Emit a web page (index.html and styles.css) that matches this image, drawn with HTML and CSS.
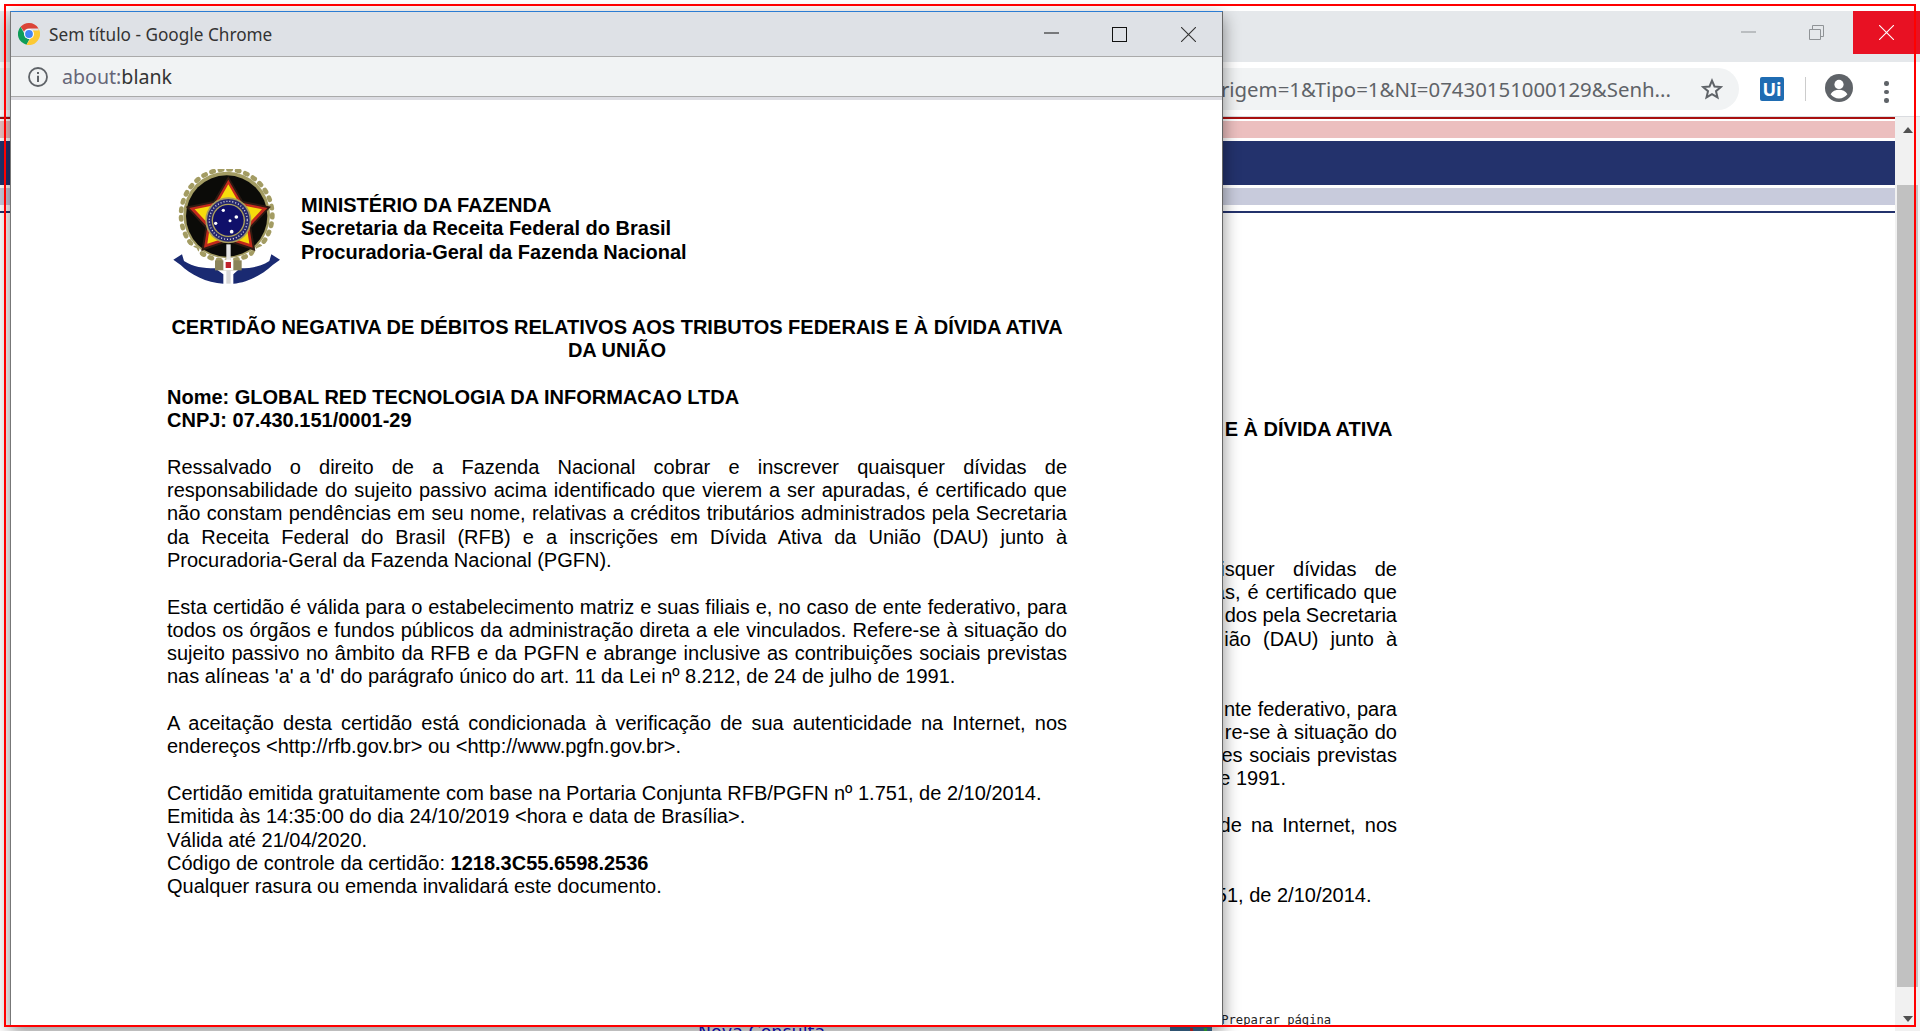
FILE: index.html
```html
<!DOCTYPE html>
<html lang="pt-BR">
<head>
<meta charset="utf-8">
<title>Sem título - Google Chrome</title>
<link rel="stylesheet" href="styles.css">
</head>
<body>
<div class="desktop">

  <section class="win-back">
    <header class="back-title">
      <svg class="bc-min" width="15" height="2" viewBox="0 0 15 2"><path d="M0 1H15" stroke="#8f9396" stroke-width="1"/></svg>
      <svg class="bc-restore" width="15" height="15" viewBox="0 0 15 15"><path d="M.5 4.500H11.500V14.500H.5ZM3.500 4.500V.5H14.500V11.500H11.500" fill="none" stroke="#8f9396"/></svg>
      <div class="bc-close"><svg width="15" height="15" viewBox="0 0 15 15"><path d="M0 0L15 15M15 0L0 15" stroke="#fff" stroke-width="1.100"/></svg></div>
    </header>
    <div class="back-tools">
      <div class="pill">
        <span class="url">rigem=1&amp;Tipo=1&amp;NI=07430151000129&amp;Senh...</span>
        <svg class="star" width="22" height="22" viewBox="0 0 22 22"><path d="M11 2.600l2.500 5.900 6.400.5-4.900 4.200 1.500 6.200L11 16.100l-5.500 3.300L7 13.200 2.100 9l6.400-.5z" fill="none" stroke="#5f6368" stroke-width="2"/></svg>
      </div>
      <div class="ui-logo">Ui</div>
      <div class="sep"></div>
      <svg class="avatar" width="28" height="28" viewBox="0 0 28 28"><circle cx="14" cy="14" r="14" fill="#5f6368"/><circle cx="14" cy="10.400" r="4.600" fill="#fff"/><path d="M5.600 20.200c1.600-3 5.200-4.400 8.400-4.400s6.800 1.400 8.400 4.400c-2 2.600-5 4.200-8.400 4.200s-6.400-1.600-8.400-4.200z" fill="#fff"/></svg>
      <div class="dots"><i></i><i></i><i></i></div>
    </div>
    <div class="back-page">
      <div class="back-main">
        <div class="band-rule"></div>
        <div class="band-pink"></div>
        <div class="band-navy"></div>
        <div class="band-lav"></div>
        <div class="band-line"></div>
        <div class="back-doc">
          <div class="frag frag-title">E À DÍVIDA ATIVA</div>
          <div class="frag-group gap-5">
            <div class="frag ws-128">isquer dívidas de</div>
            <div class="frag ws-14">as, é certificado que</div>
            <div class="frag">dos pela Secretaria</div>
            <div class="frag ws-64">ião (DAU) junto à</div>
          </div>
          <div class="frag-group gap-2">
            <div class="frag ws-04">nte federativo, para</div>
            <div class="frag ws-07">re-se à situação do</div>
            <div class="frag ws-11">es sociais previstas</div>
            <div class="frag end-111">e 1991.</div>
          </div>
          <div class="frag-group gap-1">
            <div class="frag ws-36">de na Internet, nos</div>
          </div>
          <div class="frag-group gap-2">
            <div class="frag end-26">51, de 2/10/2014.</div>
          </div>
        </div>
        <div class="back-foot">
          <a class="nova">Nova Consulta</a>
          <div class="foot-icon"><i class="fi-r"></i><i class="fi-g"></i></div>
          <span class="preparar">Preparar página</span>
        </div>
      </div>
      <div class="scrollbar">
        <div class="arrow-up"></div>
        <div class="thumb"></div>
        <div class="arrow-down"></div>
      </div>
    </div>
  </section>

  <section class="win-popup">
    <header class="pop-title">
      <svg class="chrome" width="22" height="22" viewBox="0 0 22 22">
        <path d="M11 0A11 11 0 0 1 20.500 5.500H11A5.500 5.500 0 0 0 6 8.600L2.600 3.800A11 11 0 0 1 11 0z" fill="#db4437"/>
        <path d="M2.600 3.800L6.500 11A5 5 0 0 0 11.500 16L8.500 21.700A11 11 0 0 1 2.600 3.800z" fill="#0f9d58"/>
        <path d="M20.500 5.500A11 11 0 0 1 8.500 21.700L13.600 13.500A5 5 0 0 0 14.500 7.500H20.500z" fill="#fcc934"/>
        <circle cx="11" cy="11" r="5" fill="#fff"/>
        <circle cx="11" cy="11" r="3.900" fill="#4285f4"/>
      </svg>
      <span class="pop-name">Sem título - Google Chrome</span>
      <svg class="pc-min" width="15" height="2" viewBox="0 0 15 2"><path d="M0 1H15" stroke="#111" stroke-width="1"/></svg>
      <svg class="pc-max" width="15" height="15" viewBox="0 0 15 15"><rect x=".5" y=".5" width="14" height="14" fill="none" stroke="#111"/></svg>
      <svg class="pc-close" width="15" height="15" viewBox="0 0 15 15"><path d="M0 0L15 15M15 0L0 15" stroke="#333" stroke-width="1.100"/></svg>
    </header>
    <div class="pop-addr">
      <svg width="20" height="20" viewBox="0 0 20 20"><circle cx="10" cy="10" r="9" fill="none" stroke="#5f6368" stroke-width="1.800"/><path d="M10 8.800V15M10 5V7" stroke="#5f6368" stroke-width="2"/></svg>
      <span class="addr"><span class="addr-dim">about:</span>blank</span>
    </div>
    <div class="pop-doc">
      <div class="doc-head">
        <svg class="emblem" width="109" height="116" viewBox="36 24 327 348">
          <g class="emblem-soft">
            <circle cx="200" cy="162" r="137" fill="none" stroke="#a39c63" stroke-width="14" stroke-dasharray="7 19" stroke-linecap="round"/>
            <circle cx="200" cy="162" r="130" fill="#a39c63"/>
            <circle cx="200" cy="165" r="122" fill="#0b0b08"/>
            <path d="M40 230L110 262L130 300L90 290Z" fill="#fff"/>
            <path d="M360 230L290 262L270 300L310 290Z" fill="#fff"/>
            <path d="M205 46L249 120L333 137L274 200L286 270L205 242L124 270L136 200L77 137L161 120Z" fill="#2e1a12"/>
            <path d="M205 56L245 125L322 141L268 198L278 260L205 236L132 260L142 198L88 141L165 125Z" fill="#c22a1c"/>
            <path d="M205 70L240 131L306 145L260 194L268 248L205 228L142 248L150 194L104 145L170 131Z" fill="#f6dc0c"/>
            <circle cx="205" cy="178" r="69" fill="#a99d5c"/>
            <circle cx="205" cy="178" r="64" fill="#27286f"/>
            <circle cx="205" cy="178" r="57" fill="none" stroke="#dfe0ea" stroke-width="4" stroke-dasharray="3 6"/>
            <circle cx="205" cy="178" r="50" fill="#b0a35c"/>
            <circle cx="205" cy="178" r="46" fill="#10106a"/>
            <circle cx="190" cy="148" r="5" fill="#fff"/>
            <circle cx="229" cy="168" r="5.500" fill="#fff"/>
            <circle cx="210" cy="179" r="4.500" fill="#fff"/>
            <circle cx="167" cy="187" r="5" fill="#fff"/>
            <circle cx="215" cy="212" r="5.500" fill="#fff"/>
            <path d="M40 296L66 280L72 300C100 318 130 322 165 322L190 340L190 368C140 366 90 340 62 312Z" fill="#1a2a72"/>
            <path d="M360 296L334 280L328 300C300 318 270 322 240 322L220 340L220 368C260 366 310 340 338 312Z" fill="#1a2a72"/>
            <rect x="199" y="250" width="13" height="50" fill="#e4e4e4"/>
            <rect x="165" y="298" width="80" height="30" fill="#8b845a"/>
            <rect x="190" y="296" width="30" height="32" fill="#fff"/>
            <rect x="197" y="303" width="16" height="18" fill="#c0242c"/>
            <rect x="199" y="328" width="13" height="40" fill="#d8d8d8"/>
          </g>
        </svg>
        <div class="head-text">MINISTÉRIO DA FAZENDA<br>Secretaria da Receita Federal do Brasil<br>Procuradoria-Geral da Fazenda Nacional</div>
      </div>
      <h1 class="doc-title">CERTIDÃO NEGATIVA DE DÉBITOS RELATIVOS AOS TRIBUTOS FEDERAIS E À DÍVIDA ATIVA DA UNIÃO</h1>
      <p class="doc-name">Nome: GLOBAL RED TECNOLOGIA DA INFORMACAO LTDA<br>CNPJ: 07.430.151/0001-29</p>
      <p class="doc-par">Ressalvado o direito de a Fazenda Nacional cobrar e inscrever quaisquer dívidas de responsabilidade do sujeito passivo acima identificado que vierem a ser apuradas, é certificado que não constam pendências em seu nome, relativas a créditos tributários administrados pela Secretaria da Receita Federal do Brasil (RFB) e a inscrições em Dívida Ativa da União (DAU) junto à Procuradoria-Geral da Fazenda Nacional (PGFN).</p>
      <p class="doc-par">Esta certidão é válida para o estabelecimento matriz e suas filiais e, no caso de ente federativo, para todos os órgãos e fundos públicos da administração direta a ele vinculados. Refere-se à situação do sujeito passivo no âmbito da RFB e da PGFN e abrange inclusive as contribuições sociais previstas nas alíneas 'a' a 'd' do parágrafo único do art. 11 da Lei nº 8.212, de 24 de julho de 1991.</p>
      <p class="doc-par">A aceitação desta certidão está condicionada à verificação de sua autenticidade na Internet, nos endereços &lt;http://rfb.gov.br&gt; ou &lt;http://www.pgfn.gov.br&gt;.</p>
      <p class="doc-par doc-last">Certidão emitida gratuitamente com base na Portaria Conjunta RFB/PGFN nº 1.751, de 2/10/2014.<br>Emitida às 14:35:00 do dia 24/10/2019 &lt;hora e data de Brasília&gt;.<br>Válida até 21/04/2020.<br>Código de controle da certidão: <b>1218.3C55.6598.2536</b><br>Qualquer rasura ou emenda invalidará este documento.</p>
    </div>
  </section>

  <div class="annot"></div>
</div>
</body>
</html>
```

FILE: styles.css
```css
* { box-sizing: border-box; }
html, body { margin: 0; height: 100%; overflow: hidden; background: #fff; }
.desktop { position: relative; width: 1920px; height: 1031px; overflow: hidden; background: #fff; }

/* back window */
.win-back { position: absolute; left: 0; top: 11px; width: 1920px; height: 1020px; display: flex; flex-direction: column; background: #fff; }
.back-title { height: 51px; flex: none; background: #e5e8eb; display: flex; align-items: flex-start; justify-content: flex-end; }
.bc-min { margin-top: 20px; margin-right: 53px; }
.bc-restore { margin-top: 14px; margin-right: 29px; }
.bc-close { width: 67px; height: 43px; background: #e81123; display: flex; align-items: center; justify-content: center; }
.back-tools { height: 54px; flex: none; background: #fff; display: flex; align-items: flex-start; }
.pill { width: 1739px; height: 42px; margin-top: 6px; background: #f1f3f4; border-radius: 0 21px 21px 0; display: flex; align-items: center; justify-content: flex-end; }
.url { font: 400 20.400px/42px "Noto Sans", sans-serif; color: #5f6368; white-space: nowrap; margin-right: 30px; }
.star { margin-right: 16px; flex: none; }
.ui-logo { width: 24px; height: 24px; margin: 15px 0 0 21px; border-radius: 2px; background: #1f6cb2; color: #fff; font: 700 18px/24px "Open Sans", sans-serif; text-align: center; flex: none; }
.sep { width: 1px; height: 24px; margin: 15px 0 0 21px; background: #ccc; flex: none; }
.avatar { margin: 12px 0 0 19px; flex: none; }
.dots { margin: 19px 0 0 31px; display: flex; flex-direction: column; gap: 4px; }
.dots i { display: block; width: 4.500px; height: 4.500px; border-radius: 50%; background: #5f6368; }

.back-page { flex: 1; min-height: 0; display: flex; border-top: 1px solid #dadce0; overflow: hidden; }
.back-main { flex: 1; min-width: 0; overflow: hidden; }
.band-rule { height: 2px; background: #a8100f; }
.band-pink { height: 17px; margin-top: 2px; background: #ecbfbf; }
.band-navy { height: 44px; margin-top: 3px; background: #23326c; }
.band-lav { height: 17px; margin-top: 3px; background: #c8cbdc; }
.band-line { height: 2px; margin-top: 6px; background: #23326c; }

/* the part of the page that the popup leaves visible */
.back-doc { width: 174px; margin-left: 1223px; padding-top: 205px; }
.frag { display: flex; justify-content: flex-end; height: 23.300px; font: 400 20px/23.300px "Liberation Sans", Arial, sans-serif; color: #000; white-space: nowrap; }
.frag-title { font-weight: 700; margin-right: 4.500px; }
.gap-1 { margin-top: 23.300px; }
.gap-2 { margin-top: 46.600px; }
.gap-5 { margin-top: 116.500px; }
.ws-128 { word-spacing: 12.800px; }
.ws-14 { word-spacing: 1.400px; }
.ws-64 { word-spacing: 6.440px; }
.ws-04 { word-spacing: .370px; }
.ws-07 { word-spacing: .710px; }
.ws-11 { word-spacing: 1.090px; }
.ws-36 { word-spacing: 3.550px; }
.end-111 { margin-right: 111px; }
.end-26 { margin-right: 25.500px; }

.doc-title, .doc-name, .doc-par, .head-text { font-family: "Liberation Sans", Arial, sans-serif; font-size: 20px; line-height: 23.300px; color: #000; margin: 0; }
.doc-title { font-weight: 700; text-align: center; }
.doc-name { font-weight: 700; margin-top: 23.300px; }
.doc-par { font-weight: 400; margin-top: 23.300px; text-align: justify; }
.doc-last { text-align: left; }
.head-text { font-weight: 700; }

.back-foot { display: flex; align-items: flex-start; margin-top: 106px; }
.nova { margin: 9px 0 0 698px; font: 400 17.500px/20px "DejaVu Sans", sans-serif; color: #1010d0; text-decoration: underline; white-space: nowrap; flex: none; }
.foot-icon { margin: 13px 0 0 345px; width: 42px; height: 20px; background: #3f6f98; position: relative; flex: none; }
.foot-icon i { position: absolute; top: 2px; width: 3px; height: 3px; }
.fi-r { left: 20px; background: #d22; }
.fi-g { left: 34px; background: #3b3; }
.preparar { margin-left: 9px; font: 400 12.200px/14px "DejaVu Sans Mono", monospace; color: #222; white-space: nowrap; }

.scrollbar { width: 25px; flex: none; background: #f1f1f1; display: flex; flex-direction: column; align-items: center; }
.arrow-up { width: 0; height: 0; margin-top: 10px; border: 5.500px solid transparent; border-top: 0; border-bottom: 6px solid #505050; }
.thumb { width: 21px; height: 802px; margin-top: 52px; background: #c1c1c1; }
.arrow-down { width: 0; height: 0; margin-top: 29px; border: 5.500px solid transparent; border-bottom: 0; border-top: 6px solid #505050; }

/* popup window */
.win-popup { position: absolute; left: 10px; top: 11px; width: 1213px; height: 1015px; display: flex; flex-direction: column; background: #fff; border-left: 1px solid #777; border-right: 1px solid #666; border-top: 1px solid #2b7cd3; box-shadow: 0 6px 16px rgba(0,0,0,.45); }
.pop-title { height: 45px; flex: none; background: #dee1e6; border-bottom: 1px solid #aaa; display: flex; align-items: center; }
.chrome { margin-left: 7px; flex: none; }
.pop-name { margin-left: 9px; padding-top: 2px; font: 400 17.200px/24px "Noto Sans", sans-serif; color: #333; flex: 1; white-space: nowrap; }
.pc-min { margin: 0 53px 2px 0; }
.pc-max { margin-right: 54px; }
.pc-close { margin-right: 26px; }
.pop-addr { height: 40px; flex: none; background: #f1f3f4; border-bottom: 1px solid #aaa; display: flex; align-items: center; padding-left: 17px; gap: 14px; }
.addr { padding-top: 1px; font: 400 19.600px/28px "Noto Sans", sans-serif; color: #333; }
.addr-dim { color: #667; }
.pop-doc { flex: 1; min-height: 0; border-top: 3px solid #dcdce2; padding: 69px 155px 0 156px; overflow: hidden; }
.doc-head { display: flex; align-items: center; gap: 20px; margin-left: 5px; margin-bottom: 31px; }
.head-text { margin-top: 4px; }
.emblem { flex: none; }
.emblem-soft { filter: blur(1.500px); }

/* red annotation frame */
.annot { position: absolute; left: 4px; top: 4px; width: 1912px; height: 1023px; border: 2px solid #f00; pointer-events: none; }
```
